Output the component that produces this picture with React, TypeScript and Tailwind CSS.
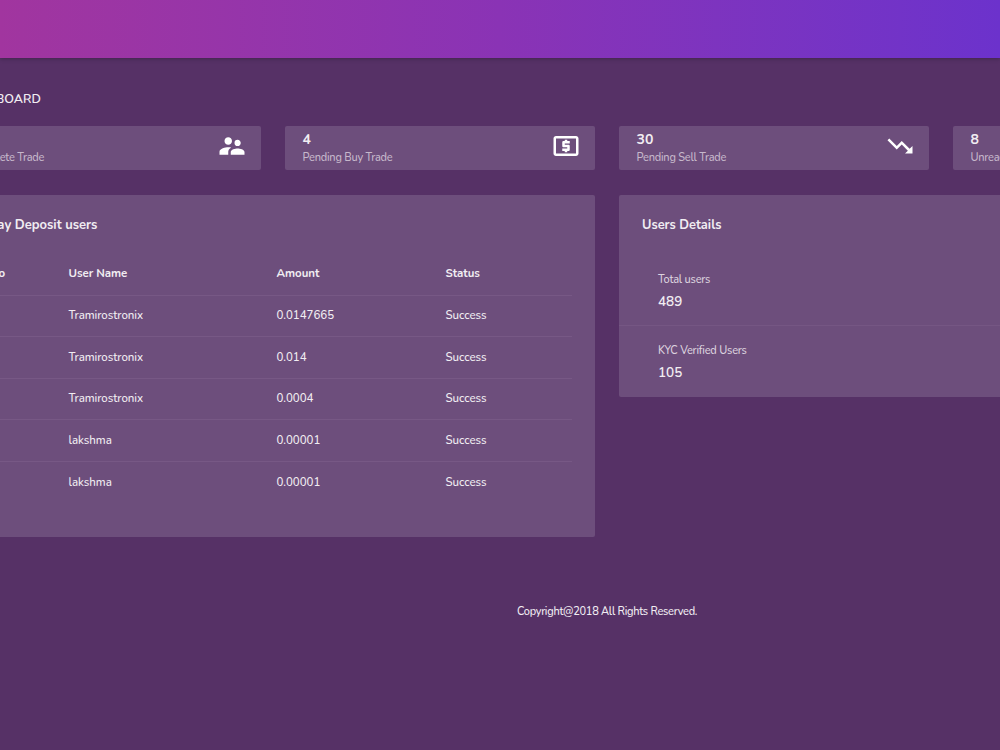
import React from 'react';
import type { IconType } from 'react-icons';
import { MdLocalAtm, MdMailOutline, MdSupervisorAccount, MdTrendingDown } from 'react-icons/md';

interface Stat {
  value: string;
  label: string;
  icon: IconType;
}

const stats: Stat[] = [
  { value: '', label: 'Complete Trade', icon: MdSupervisorAccount },
  { value: '4', label: 'Pending Buy Trade', icon: MdLocalAtm },
  { value: '30', label: 'Pending Sell Trade', icon: MdTrendingDown },
  { value: '8', label: 'Unread Message', icon: MdMailOutline },
];

const deposits = [
  { name: 'Tramirostronix', amount: '0.0147665', status: 'Success' },
  { name: 'Tramirostronix', amount: '0.014', status: 'Success' },
  { name: 'Tramirostronix', amount: '0.0004', status: 'Success' },
  { name: 'lakshma', amount: '0.00001', status: 'Success' },
  { name: 'lakshma', amount: '0.00001', status: 'Success' },
];

const userDetails = [
  { label: 'Total users', value: '489' },
  { label: 'KYC Verified Users', value: '105' },
];

function StatCard({ stat }: { stat: Stat }) {
  const Icon = stat.icon;
  return (
    <div className="flex h-11 justify-between rounded-[2px] bg-[#6d4e7c] pl-[17.5px] pr-[14.5px]">
      <div className="pt-1">
        <div className="h-[19px] text-[14px] leading-[19px] font-bold text-[#f1edf2]">{stat.value}</div>
        <div className="mt-px text-[11px] leading-4 font-medium tracking-[-0.23px] whitespace-nowrap text-[#c6b8cb]">
          {stat.label}
        </div>
      </div>
      <Icon className="mt-[5px] size-[30px] text-white" />
    </div>
  );
}

function DepositTable() {
  return (
    <section className="h-[342px] w-[644px] rounded-[2px] bg-[#6d4e7c] px-[23px] pt-5 text-[#f1edf2]">
      <h2 className="pl-px text-[13px] leading-5 font-bold">Today Deposit users</h2>
      <table className="mt-[18px] w-full table-fixed text-left text-[11.5px] font-medium tracking-[-0.04px]">
        <colgroup>
          <col className="w-[86.5px]" />
          <col className="w-[208px]" />
          <col className="w-[169px]" />
          <col />
        </colgroup>
        <thead>
          <tr className="h-[42px] border-b border-[#775885]">
            <th className="pr-2 pl-1.5 font-bold">S.No</th>
            <th className="px-2 font-bold">User Name</th>
            <th className="px-2 font-bold">Amount</th>
            <th className="px-2 font-bold">Status</th>
          </tr>
        </thead>
        <tbody>
          {deposits.map((row, i) => (
            <tr key={i} className="h-[41.6px] border-b border-[#775885] last:border-b-0">
              <td />
              <td className="px-2">{row.name}</td>
              <td className="px-2">{row.amount}</td>
              <td className="px-2">{row.status}</td>
            </tr>
          ))}
        </tbody>
      </table>
    </section>
  );
}

function UsersDetails() {
  return (
    <section className="h-[202px] w-[644px] rounded-[2px] bg-[#6d4e7c] pt-5 text-[#f1edf2]">
      <h2 className="mb-5 px-[23px] text-[12.8px] leading-5 font-bold">Users Details</h2>
      {userDetails.map((item) => (
        <div key={item.label} className="h-[71px] border-b border-[#755683] px-[39px] pt-[17px] last:border-b-0">
          <div className="text-[11px] leading-4 font-medium tracking-[-0.22px] text-[#dcd2df]">{item.label}</div>
          <div className="mt-[3px] text-[13.5px] leading-[22px] font-semibold">{item.value}</div>
        </div>
      ))}
    </section>
  );
}

export default function App() {
  return (
    <div className="h-[750px] w-[1000px] overflow-hidden bg-[#563166] font-['Nunito','Lato',sans-serif]">
      <header className="h-[58px] bg-linear-to-r from-[#a1359f] via-[#8a33b5] to-[#6c32cc] shadow-[0_1px_4px_rgba(0,0,0,0.25)]" />
      <main className="-ml-[49px] w-[1312px] pt-[31px]">
        <h1 className="pl-[9px] text-[12.5px] leading-5 font-semibold text-[#f1edf2]">DASHBOARD</h1>
        <div className="mt-[17px] grid grid-cols-4 gap-6">
          {stats.map((stat) => (
            <StatCard key={stat.label} stat={stat} />
          ))}
        </div>
        <div className="mt-[25px] flex items-start gap-6">
          <DepositTable />
          <UsersDetails />
        </div>
      </main>
      <footer className="mt-[65px] pl-[517px] text-[11px] leading-5 font-medium tracking-[-0.28px] text-[#f1edf2]">
        Copyright@2018 All Rights Reserved.
      </footer>
    </div>
  );
}
